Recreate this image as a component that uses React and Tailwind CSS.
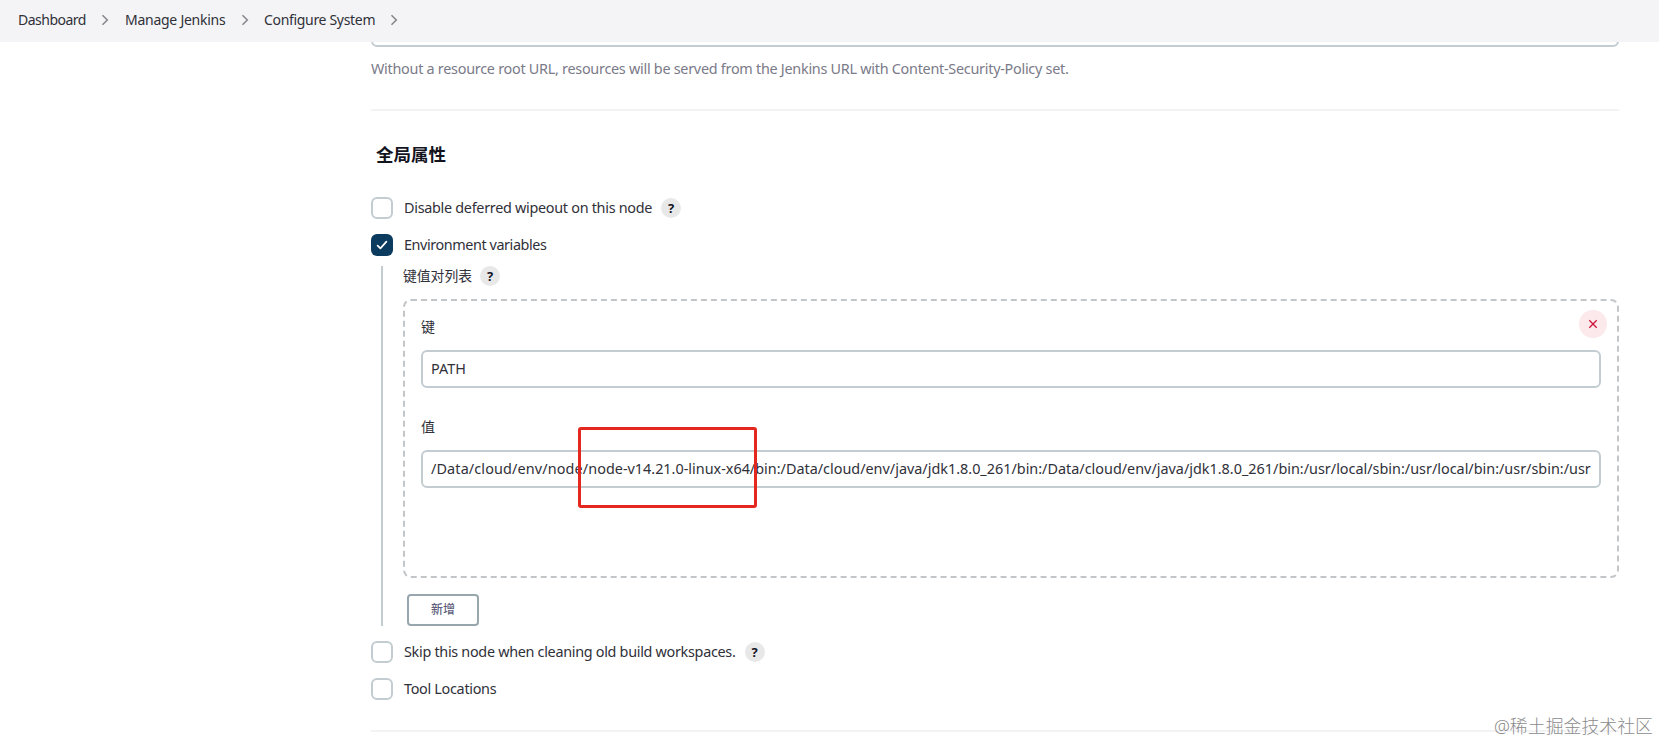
/*
 * App.jsx — Jenkins "Configure System" page, scrolled to the global properties.
 */

const crumbs = [
  { label: 'Dashboard', className: 'w-[68px] tracking-[-0.5px]', gap: 'ml-[15px] mr-[16px]' },
  { label: 'Manage Jenkins', className: 'w-[101px] tracking-[-0.26px]', gap: 'ml-[15px] mr-[15px]' },
  { label: 'Configure System', className: 'w-[111px] tracking-[-0.32px]', gap: 'ml-[15px]' },
]

const NODE_DIR = '/Data/cloud/env/node/'
const PATH_REST =
  'node-v14.21.0-linux-x64/bin:/Data/cloud/env/java/jdk1.8.0_261/bin:/Data/cloud/env/java/jdk1.8.0_261/bin:/usr/local/sbin:/usr/local/bin:/usr/sbin:/usr/bin'

function Chevron({ className }) {
  return (
    <svg viewBox="0 0 8 12" className={`h-3 w-2 shrink-0 ${className}`} fill="none" stroke="#84848b" strokeWidth="1.5">
      <path d="M1.5 1.3 L6.3 6 L1.5 10.7" />
    </svg>
  )
}

function HelpButton({ className }) {
  return (
    <button
      className={`flex h-5 w-5 shrink-0 items-center justify-center rounded-full bg-[#e8e8e9] text-[13px] leading-none font-bold text-[#14141f] ${className}`}
    >
      ?
    </button>
  )
}

function Checkbox({ checked }) {
  if (checked) {
    return (
      <span className="flex h-[22px] w-[22px] shrink-0 items-center justify-center rounded-md bg-[#0b3b5f]">
        <svg viewBox="0 0 12 12" className="h-3 w-3" fill="none" stroke="white" strokeWidth="1.7" strokeLinecap="round" strokeLinejoin="round">
          <path d="M1.6 6.6 L4.4 9.4 L10.4 2.6" />
        </svg>
      </span>
    )
  }
  return <span className="h-[22px] w-[22px] shrink-0 rounded-md border-2 border-[#c3ccd1] bg-white" />
}

/* One checkbox line: box, label and an optional help button */
function Property({ label, checked, help, className, labelClass }) {
  return (
    <div className={`flex h-[22px] items-center ${className}`}>
      <Checkbox checked={checked} />
      <span className={`ml-[11px] leading-5 whitespace-nowrap ${labelClass}`}>{label}</span>
      {help && <HelpButton className="ml-[9px]" />}
    </div>
  )
}

function Field({ label, className, children }) {
  return (
    <div className={className}>
      <div className="h-5 text-sm leading-5">{label}</div>
      <div className="mt-[13px] flex h-[38px] items-center rounded-md border-2 border-[#c3ccd1] bg-white px-2 pb-px">
        <div className="w-full overflow-hidden leading-5 whitespace-nowrap">{children}</div>
      </div>
    </div>
  )
}

export default function App() {
  return (
    <div className="relative h-[744px] w-[1659px] overflow-hidden bg-white font-['Noto_Sans','Noto_Sans_CJK_SC',sans-serif] text-[14.4px] text-[#303039]">
      {/* === BREADCRUMBS === */}
      <header className="flex h-[42px] items-center bg-[#f4f4f6] pb-[2px] pl-[18px] text-sm">
        {crumbs.map((crumb) => (
          <div key={crumb.label} className="flex items-center">
            <span className={`whitespace-nowrap ${crumb.className}`}>{crumb.label}</span>
            <Chevron className={crumb.gap} />
          </div>
        ))}
      </header>

      <main className="ml-[371px] w-[1248px]">
        {/* Bottom edge of the input that is scrolled under the header */}
        <div className="h-[5px] overflow-hidden">
          <div className="-mt-[33px] h-[38px] rounded-md border-2 border-[#c3ccd1]" />
        </div>
        <p className="mt-3 h-5 leading-5 tracking-[-0.268px] whitespace-nowrap text-[#7a7a88]">
          Without a resource root URL, resources will be served from the Jenkins URL with Content-Security-Policy set.
        </p>
        <hr className="mt-[30px] border-t-2 border-[#f3f3f5]" />

        {/* === GLOBAL PROPERTIES === */}
        <h2 className="mt-[31px] ml-[5px] h-6 text-[17.5px] leading-6 font-bold text-[#14141f]">全局属性</h2>

        <Property
          className="mt-[31px]"
          label="Disable deferred wipeout on this node"
          labelClass="tracking-[-0.29px]"
          help
        />
        <Property className="mt-[15px]" label="Environment variables" labelClass="tracking-[-0.42px]" checked />

        <div className="mt-[10px] ml-[10px] h-[360px] border-l-2 border-[#c3ccd1] pl-5">
          <div className="flex h-5 items-center">
            <span className="w-[69px] text-[13.8px] leading-5 whitespace-nowrap">键值对列表</span>
            <HelpButton className="ml-2" />
          </div>

          <div className="relative mt-[13px] h-[279px] rounded-lg border-2 border-dashed border-[#c3c6c9] px-4">
            <Field className="pt-[16px]" label="键">
              PATH
            </Field>
            <Field className="pt-[29px]" label="值">
              <span className="tracking-[0.13px]">{NODE_DIR}</span>
              {PATH_REST}
            </Field>
            <button className="absolute top-[9px] right-[10px] flex h-7 w-7 items-center justify-center rounded-full bg-[#fce9ec]">
              <svg viewBox="0 0 10 10" className="h-2.5 w-2.5" fill="none" stroke="#cf1239" strokeWidth="1.3">
                <path d="M1.3 1.3 L8.7 8.7 M8.7 1.3 L1.3 8.7" />
              </svg>
            </button>
            {/* Marker around the node version */}
            <div className="absolute top-[126px] left-[173px] h-[81px] w-[179px] rounded-[3px] border-3 border-[#e4271f]" />
          </div>

          <button className="mt-4 ml-1 flex h-8 w-[72px] items-center justify-center rounded border-2 border-[#98a6ad] text-xs font-medium text-[#5f5f7c]">
            新增
          </button>
        </div>

        <Property
          className="mt-[15px]"
          label="Skip this node when cleaning old build workspaces."
          labelClass="tracking-[-0.3px]"
          help
        />
        <Property className="mt-[15px]" label="Tool Locations" labelClass="tracking-[-0.3px]" />
        <hr className="mt-[30px] border-t-2 border-[#f3f3f5]" />
      </main>

      <div className="absolute right-[6px] bottom-[6px] h-6 text-[17.9px] leading-6 font-light whitespace-nowrap text-[#8c8c8c]">
        @稀土掘金技术社区
      </div>
    </div>
  )
}
